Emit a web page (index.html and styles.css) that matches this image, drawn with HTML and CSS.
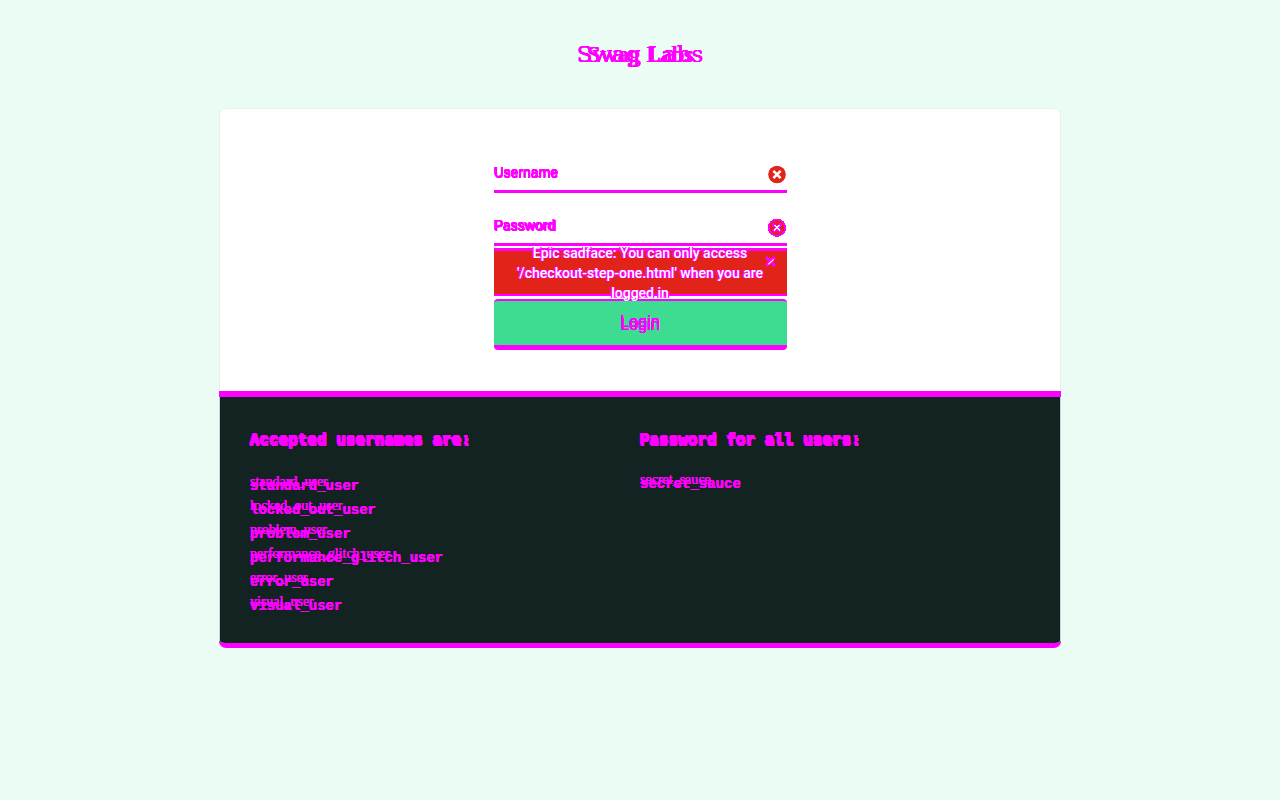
FILE: index.html
```html
<!DOCTYPE html>
<html lang="en">
<head>
<meta charset="utf-8">
<meta name="viewport" content="width=device-width, initial-scale=1">
<title>Swag Labs</title>
<link rel="stylesheet" href="styles.css">
</head>
<body>
<header class="logo"><h1 class="stack"><span class="logo-wide">Swag Labs</span><span class="logo-small" aria-hidden="true">Swag Labs</span></h1></header>
<main class="card">
  <section class="login">
    <form class="form">
      <div class="field">
        <input class="input" type="text" aria-label="Username" placeholder="Username">
        <span class="ghost-label" aria-hidden="true">Username</span>
        <svg class="status" viewBox="0 0 18 18" aria-hidden="true"><circle cx="9" cy="8.5" r="8.8" fill="#e2231a"/><path d="M5.4 4.9l7.2 7.2M12.6 4.9l-7.2 7.2" stroke="#fff" stroke-width="2.6"/></svg>
      </div>
      <div class="field">
        <input class="input" type="password" aria-label="Password" placeholder="Password">
        <span class="ghost-label" aria-hidden="true">Password</span>
        <svg class="status" viewBox="0 0 18 18" aria-hidden="true" shape-rendering="crispEdges"><circle cx="9" cy="8.7" r="8.2" fill="#e2231a" stroke="#f0f" stroke-width="1.8"/><path d="M5 4.7l8 8M13 4.7l-8 8" stroke="#f0f" stroke-width="3.6"/><path d="M6.2 5.9l5.6 5.6M11.8 5.9l-5.6 5.6" stroke="#fff" stroke-width="1.4"/></svg>
      </div>
      <div class="error" role="alert">
        <p class="error-text">Epic sadface: You can only access '/checkout-step-one.html' when you are logged in</p>
        <button class="error-close" type="button" aria-label="Dismiss"><svg viewBox="0 0 10 10" aria-hidden="true"><path d="M1 1l8 8M9 1L1 9" stroke="#f0f" stroke-width="3"/><path d="M3 7.5L8 3" stroke="#fff" stroke-width="1"/></svg></button>
      </div>
      <button class="submit stack" type="submit"><span class="submit-main">Login</span><span class="submit-low" aria-hidden="true">Login</span></button>
    </form>
  </section>
  <section class="credentials">
    <div>
      <h2 class="stack"><span class="head-main">Accepted usernames are:</span><span class="head-low" aria-hidden="true">Accepted usernames are:</span></h2>
      <ul class="names">
        <li class="stack"><span class="name-serif">standard_user</span><span class="name-mono" aria-hidden="true">standard_user</span></li>
        <li class="stack"><span class="name-serif">locked_out_user</span><span class="name-mono" aria-hidden="true">locked_out_user</span></li>
        <li class="stack"><span class="name-serif">problem_user</span><span class="name-mono" aria-hidden="true">problem_user</span></li>
        <li class="stack"><span class="name-serif">performance_glitch_user</span><span class="name-mono" aria-hidden="true">performance_glitch_user</span></li>
        <li class="stack"><span class="name-serif">error_user</span><span class="name-mono" aria-hidden="true">error_user</span></li>
        <li class="stack"><span class="name-serif">visual_user</span><span class="name-mono" aria-hidden="true">visual_user</span></li>
      </ul>
    </div>
    <div>
      <h2 class="stack"><span class="head-main">Password for all users:</span><span class="head-low" aria-hidden="true">Password for all users:</span></h2>
      <p class="names secret stack"><span class="name-serif">secret_sauce</span><span class="name-mono" aria-hidden="true">secret_sauce</span></p>
    </div>
  </section>
</main>
</body>
</html>
```
FILE: styles.css
```css
* { box-sizing: border-box; }
:root {
  --mark: #f0f;
  --green: #3ddc91;
  --red: #e2231a;
  --dark: #132322;
  --heavy: 0 0 0 var(--mark), 0 0 0 var(--mark), 0 0 0 var(--mark);
}
body {
  margin: 0;
  min-height: 100vh;
  background: #ebfcf5;
  color: var(--mark);
  font: 14px/20px Roboto, "Liberation Sans", sans-serif;
}
h1, h2, p, ul { margin: 0; padding: 0; }

/* Both text layers share one grid cell. */
.stack { display: grid; }
.stack > * { grid-area: 1 / 1; }

.logo { padding: 40px 16px; text-align: center; }
.logo h1 { font-weight: 400; line-height: 28px; text-shadow: var(--heavy); }
.logo-wide { font-size: 23px; font-family: "DejaVu Serif", serif; }
.logo-small { font-size: 24px; font-family: "Liberation Serif", serif; text-shadow: var(--heavy), 1px 0 0 var(--mark); }

.card {
  width: calc(100% - 32px);
  max-width: 842px;
  margin: 0 auto;
  background: #fff;
  border-radius: 7px;
  box-shadow: inset 0 0 0 1px #e6f3ed;
}
.login { padding: 51px 16px 41px; }
.form { width: 100%; max-width: 293px; margin: 0 auto; }
.field { position: relative; padding-bottom: 12px; }
.field + .field { padding-bottom: 2px; }
.input {
  display: block;
  width: 100%;
  height: 34px;
  padding: 0 30px 5px 0;
  border: 0;
  border-bottom: 3px solid var(--mark);
  border-radius: 0;
  background: transparent;
  font: 14px/20px "Liberation Sans", sans-serif;
  outline: 0;
}
.field + .field .input { height: 41px; padding-top: 7px; }
.input::placeholder { color: var(--mark); opacity: 1; text-shadow: var(--heavy); }
.ghost-label {
  position: absolute;
  left: 1px;
  top: 4px;
  pointer-events: none;
  text-shadow: var(--heavy);
}
.field + .field .ghost-label { top: 11px; }
.status { position: absolute; top: 7px; right: 1px; width: 18px; height: 18px; overflow: visible; }
.field + .field .status { top: 14px; }

.error {
  position: relative;
  display: flex;
  align-items: center;
  justify-content: center;
  height: 48px;
  margin-bottom: 3px;
  padding: 0 20px;
  background: var(--red);
  border-top: 3px solid var(--mark);
  border-bottom: 2px solid var(--mark);
}
.error-text {
  color: #fff;
  font-weight: 500;
  text-align: center;
  text-shadow: 1px 0 0 var(--mark), -1px 0 0 var(--mark), 1px 0 0 var(--mark), -1px 0 0 var(--mark);
}
.error-close {
  position: absolute;
  top: 5px;
  right: 11px;
  width: 11px;
  height: 11px;
  padding: 0;
  border: 0;
  background: none;
}
.error-close svg { display: block; width: 100%; height: 100%; }

.submit {
  width: 100%;
  padding: 12px 0 11px;
  border: solid var(--mark);
  border-width: 2px 0 5px;
  border-radius: 4px;
  background: var(--green);
  color: var(--mark);
  font: 16px/18px Roboto, sans-serif;
  text-shadow: var(--heavy);
}
.submit-low { padding-top: 3px; font-family: "Liberation Sans", sans-serif; }

.credentials {
  display: grid;
  grid-template-columns: 390fr 392fr;
  padding: 29px 29px 27px 31px;
  background: var(--dark);
  border-top: 6px solid var(--mark);
  border-bottom: 5px solid var(--mark);
  border-radius: 0 0 7px 7px;
  box-shadow: inset 1px 0 0 #c8d4ce, inset -1px 0 0 #c8d4ce;
}
.credentials h2 {
  margin-bottom: 18px;
  font: bold 16px/28px "Liberation Mono", monospace;
  text-shadow: var(--heavy), -1px 0 0 var(--mark);
}
.head-low { padding-top: 2px; font-family: "DejaVu Sans Mono", monospace; line-height: 26px; }
.names { list-style: none; line-height: 24px; text-shadow: var(--heavy); }
.name-serif { font-family: "Liberation Serif", serif; line-height: 20px; }
.name-mono { padding-top: 4px; font-family: "Liberation Mono", monospace; font-weight: 700; line-height: 20px; }
.secret { margin-top: -2px; }

@media (max-width: 600px) {
  .credentials { grid-template-columns: 1fr; gap: 24px; }
}
```
